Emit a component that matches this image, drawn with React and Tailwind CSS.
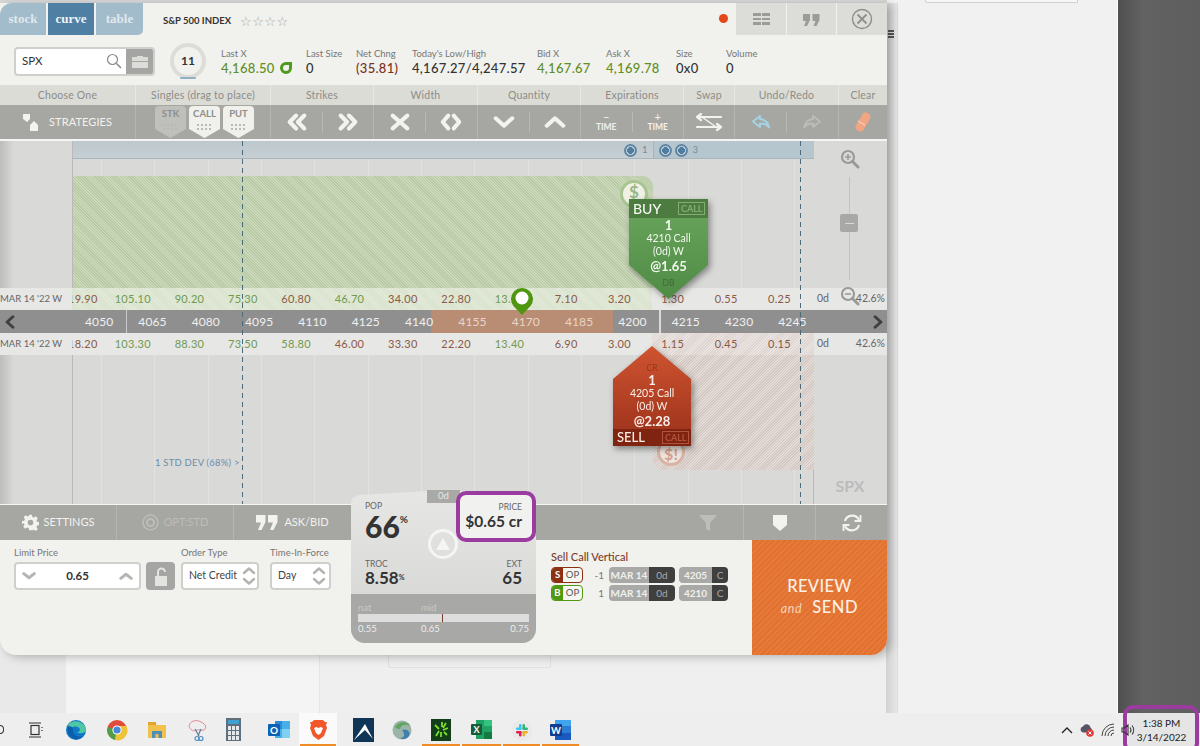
import React from "react";

const font = "[font-family:Lato,'Liberation_Sans',sans-serif]";

const Chev = ({ d, size = 22, color = "#f2f2ee", w = 4.5 }) => (
  <svg width={size} height={size} viewBox="0 0 24 24" fill="none" stroke={color} strokeWidth={w} strokeLinecap="round" strokeLinejoin="round">
    <path d={d} />
  </svg>
);

const Mag = ({ kind }) => (
  <svg width="20" height="20" viewBox="0 0 20 20" fill="none" stroke="#9a9a98" strokeWidth="2.2">
    <circle cx="8" cy="8" r="6" />
    <path d="M12.5 12.5 L18 18" strokeWidth="3" strokeLinecap="round" />
    <path d={kind === "plus" ? "M5 8h6M8 5v6" : "M5 8h6"} strokeWidth="1.6" />
  </svg>
);

const labels = [
  ["Choose One", "w-[136px]"],
  ["Singles (drag to place)", "w-[135px]"],
  ["Strikes", "w-[103px]"],
  ["Width", "w-[104px]"],
  ["Quantity", "w-[103px]"],
  ["Expirations", "w-[103px]"],
  ["Swap", "w-[51px]"],
  ["Undo/Redo", "w-[104px]"],
  ["Clear", "w-[48px]"],
];

const stats = [
  ["Last X", "4,168.50", "text-[#5f8f25]", "w-[85px]", true],
  ["Last Size", "0", "text-[#333]", "w-[50px]"],
  ["Net Chng", "(35.81)", "text-[#7a3222]", "w-[56px]"],
  ["Today's Low/High", "4,167.27/4,247.57", "text-[#333]", "w-[125px]"],
  ["Bid X", "4,167.67", "text-[#5f8f25]", "w-[69px]"],
  ["Ask X", "4,169.78", "text-[#5f8f25]", "w-[70px]"],
  ["Size", "0x0", "text-[#333]", "w-[50px]"],
  ["Volume", "0", "text-[#333]", "w-[60px]"],
];

const strikes = [4050, 4065, 4080, 4095, 4110, 4125, 4140, 4155, 4170, 4185, 4200, 4215, 4230, 4245];
const topVals = [
  ["19.90", "r"], ["105.10", "g"], ["90.20", "g"], ["75.30", "g"], ["60.80", "r"], ["46.70", "g"], ["34.00", "r"],
  ["22.80", "r"], ["13.70", "g"], ["7.10", "r"], ["3.20", "r"], ["1.30", "r"], ["0.55", "r"], ["0.25", "r"],
];
const botVals = [
  ["18.20", "r"], ["103.30", "g"], ["88.30", "g"], ["73.50", "g"], ["58.80", "g"], ["46.00", "r"], ["33.30", "r"],
  ["22.20", "r"], ["13.40", "g"], ["6.90", "r"], ["3.00", "r"], ["1.15", "r"], ["0.45", "r"], ["0.15", "r"],
];

const ValueRow = ({ vals, bg, rightBg }) => (
  <div className="flex h-[22px] items-center bg-[#e7e7e6]">
    <div className="w-[72px] shrink-0 whitespace-nowrap text-[9.5px] text-[#666]">MAR 14 '22 W</div>
    <div className="relative flex h-full w-[742px] shrink-0 overflow-hidden">
      <div className={`h-full w-[580px] shrink-0 ${bg}`} />
      <div className={`h-full w-[162px] shrink-0 ${rightBg}`} />
      <div className="absolute inset-0 flex">
        {vals.map(([v, c]) => (
          <div key={v} className="flex h-full w-[53.33px] shrink-0 items-center justify-end pr-[28px] first:ml-[0.3px]">
            <span className={`whitespace-nowrap text-[11px] tracking-[0.3px] ${c === "g" ? "text-[#6f9a50]" : "text-[#8a5a46]"}`}>{v}</span>
          </div>
        ))}
      </div>
    </div>
    <div className="flex w-[73px] shrink-0 items-center justify-between pl-[3px] pr-[2px] text-[10.5px] text-[#666]">
      <span>0d</span>
      <span>42.6%</span>
    </div>
  </div>
);

const Chip = ({ name, bg }) => (
  <div className={`h-[32px] w-[31px] pt-[2px] text-center [clip-path:polygon(0_0,100%_0,100%_72%,50%_100%,0_72%)] rounded-t-[4px] ${bg}`}>
    <div className="text-[9.5px] font-bold leading-[12px] text-[#8e8e8a]">{name}</div>
    <div className="mx-auto mt-[4px] grid w-[15px] grid-cols-4 gap-[1.5px]">
      {Array.from({ length: 8 }).map((_, i) => (
        <span key={i} className="h-[2px] w-[2px] bg-[#b9b9b5]" />
      ))}
    </div>
  </div>
);

const Sep = () => <div className="h-[20px] w-px bg-[#b9b9b5]" />;

const TimeBtn = ({ s }) => (
  <div className="flex w-[51px] flex-col items-center leading-none text-[#f2f2ee]">
    <span className="text-[11px] leading-[9px]">{s}</span>
    <span className="mt-[2px] text-[8.5px] font-bold">TIME</span>
  </div>
);

const Spinner = () => (
  <svg width="14" height="20" viewBox="0 0 14 20" fill="none" stroke="#b4b4b0" strokeWidth="2.4" strokeLinecap="round" strokeLinejoin="round">
    <path d="M2 7 L7 2.5 L12 7 M2 13 L7 17.5 L12 13" />
  </svg>
);

const LegRow = ({ side, sideBg, border, qty, strike }) => (
  <div className="flex h-[16px] items-center">
    <div className={`flex h-[16px] w-[32px] overflow-hidden rounded-[4px] border ${border} bg-[#f5f5f2]`}>
      <span className={`w-[11px] text-center text-[9.5px] font-bold leading-[14px] text-white ${sideBg}`}>{side}</span>
      <span className="flex-1 text-center text-[9.5px] leading-[14px] text-[#555]">OP</span>
    </div>
    <span className="w-[21px] text-right text-[10px] text-[#777]">{qty}</span>
    <div className="ml-[5px] flex h-[16px] w-[66px] overflow-hidden rounded-[4px] text-[10px] font-bold leading-[16px]">
      <span className="w-[40px] bg-[#a9a9a7] text-center text-[#f0f0ee]">MAR 14</span>
      <span className="flex-1 bg-[#3f3f3f] text-center font-normal text-[#a9a9a7]">0d</span>
    </div>
    <div className="ml-[4px] flex h-[16px] w-[49px] overflow-hidden rounded-[4px] text-[10px] font-bold leading-[16px]">
      <span className="w-[33px] bg-[#a9a9a7] text-center text-[#f0f0ee]">{strike}</span>
      <span className="flex-1 bg-[#3f3f3f] text-center font-normal text-[#a9a9a7]">C</span>
    </div>
  </div>
);

const taskIcons = [
  { w: 40, el: (
    <svg width="18" height="18" viewBox="0 0 18 18" fill="none" stroke="#333" strokeWidth="1.2"><rect x="5" y="4.5" width="8" height="9" /><path d="M3 2h12M3 16h12M16 6v1M16 9v1" /></svg>
  ) },
  { w: 42, el: (
    <svg width="22" height="22" viewBox="0 0 22 22"><circle cx="11" cy="11" r="10" fill="#0f78c9" /><path d="M3 6 C6 0 20 1 21 11 C21 14 15 15 12 13.5 C16 13 16 8 11 7.5 C7 7.5 4 10 3 6Z" fill="#4fc7a4" /><path d="M8 11c0 5 5 8 10 6-3 4-9 4-12 1-3-2-4-7-3-10 2-2 5 0 5 3z" fill="#0a5fa8" /></svg>
  ) },
  { w: 40, el: (
    <svg width="22" height="22" viewBox="0 0 22 22"><circle cx="11" cy="11" r="10" fill="#e24a3b" /><path d="M11 11 L2 8 A10 10 0 0 0 9 21Z" fill="#4f9f4a" /><path d="M11 7h9.5A10 10 0 0 1 9 21Z" fill="#eec33a" /><circle cx="11" cy="11" r="4.6" fill="#fff" /><circle cx="11" cy="11" r="3.6" fill="#4a86d8" /></svg>
  ) },
  { w: 40, el: (
    <svg width="20" height="20" viewBox="0 0 20 20"><path d="M1 3h7l2 2h9v13H1z" fill="#f0c24d" /><rect x="1" y="2" width="8" height="3" fill="#e0a52e" /><rect x="5" y="11" width="10" height="7" fill="#4f8fb8" /><rect x="8.5" y="14" width="3" height="4" fill="#f0c24d" /></svg>
  ) },
  { w: 42, el: (
    <svg width="22" height="24" viewBox="0 0 22 24" fill="none"><path d="M2 8c1-5 7-7 12-4 5 2 6 6 3 8-3 1-5-1-7 0-3 2-7 0-8-4z" stroke="#e08a9a" strokeWidth="1" /><path d="M8 11l4 7M14 11l-3 7" stroke="#5d7f9e" strokeWidth="1.2" /><circle cx="10" cy="20.5" r="2" stroke="#4d8fc0" strokeWidth="1.2" /><circle cx="14" cy="20.5" r="2" stroke="#4d8fc0" strokeWidth="1.2" /></svg>
  ) },
  { w: 38, el: (
    <svg className="-translate-x-[5px]" width="15" height="23" viewBox="0 0 15 23"><rect width="15" height="23" fill="#5d6f7d" /><rect x="2" y="2" width="11" height="4" fill="#3ea0d0" />{[0, 1, 2].map((r) => [0, 1, 2].map((c) => <rect key={`${r}${c}`} x={2 + c * 4} y={8 + r * 5} width="3" height="4" fill="#e4e8ea" />))}</svg>
  ) },
  { w: 42, el: (
    <svg width="23" height="21" viewBox="0 0 23 21"><rect x="8" y="2" width="15" height="17" fill="#48b0e8" /><rect x="8" y="2" width="7" height="8" fill="#2c8ad8" /><rect x="15" y="10" width="8" height="9" fill="#7fd0f2" /><rect x="1" y="5" width="12" height="12" rx="1" fill="#0b63b5" /><text x="7" y="15" fontSize="10" fontWeight="700" fill="#fff" textAnchor="middle">O</text></svg>
  ) },
  { w: 38, active: true, el: (
    <svg width="19" height="22" viewBox="0 0 19 22"><path d="M5 1h9l2 2 2 0-1 3 1 3-3 8-5.5 4-5.5-4-3-8 1-3-1-3 2 0z" fill="#f1572a" /><path d="M5 9l2.5-1 2 1 2-1 2.5 1-2 5-2.5 2-2.500-2z" fill="#fff" /></svg>
  ) },
  { w: 6, sep: true },
  { w: 40, el: (
    <svg width="21" height="24" viewBox="0 0 21 24"><rect width="21" height="24" fill="#0f3557" /><path d="M1 22 L12 6 L20 21 L12 12z" fill="#fff" /></svg>
  ) },
  { w: 38, el: (
    <svg width="20" height="22" viewBox="0 0 20 22"><circle cx="10" cy="11" r="9.5" fill="#9bb4a8" /><path d="M3 8c4-6 12-6 15-1-4-2-9-2-10 3-3 0-4-1-5-2z" fill="#5fa45f" /><path d="M10 11c5-2 9 2 7 6-2 3-6 4-9 2 4 0 6-3 2-8z" fill="#3f7fb0" /></svg>
  ) },
  { w: 40, el: (
    <svg width="20" height="22" viewBox="0 0 20 22"><rect width="20" height="22" fill="#123f1a" /><path d="M11 3v5M15 4l-3 5M17 9l-5 2M4 6l4 4M8 12l-3 5M10 13v5M13 13l3 3" stroke="#7dde2e" strokeWidth="1.8" /></svg>
  ) },
  { w: 41, el: (
    <svg width="21" height="21" viewBox="0 0 21 21"><rect x="5" y="1" width="16" height="19" fill="#21a366" /><rect x="13" y="1" width="8" height="6" fill="#33c481" /><rect x="13" y="13" width="8" height="7" fill="#107c41" /><rect x="0" y="5" width="11" height="11" rx="1" fill="#185c37" /><text x="5.5" y="14" fontSize="9" fontWeight="700" fill="#fff" textAnchor="middle">X</text></svg>
  ) },
  { w: 39, el: (
    <svg width="22" height="22" viewBox="0 0 22 22"><circle cx="11" cy="11" r="10.5" fill="#e9e9e9" /><rect x="8" y="5" width="2.5" height="6" rx="1.2" fill="#36c5f0" /><rect x="5" y="8.5" width="5.5" height="2.5" rx="1.2" fill="#36c5f0" /><rect x="11.5" y="5" width="2.5" height="6" rx="1.2" fill="#2eb67d" /><rect x="11.5" y="8.5" width="5.5" height="2.5" rx="1.2" fill="#2eb67d" /><rect x="11.5" y="12" width="2.5" height="5.5" rx="1.2" fill="#ecb22e" /><rect x="11.5" y="12" width="5.5" height="2.5" rx="1.2" fill="#ecb22e" /><rect x="8" y="12" width="2.5" height="5.5" rx="1.2" fill="#e01e5a" /><rect x="5" y="12" width="5.5" height="2.5" rx="1.2" fill="#e01e5a" /></svg>
  ) },
  { w: 39, el: (
    <svg width="21" height="20" viewBox="0 0 21 20"><rect x="5" y="0" width="16" height="20" fill="#2b7cd3" /><rect x="5" y="0" width="16" height="6" fill="#41a5ee" /><rect x="5" y="13" width="16" height="7" fill="#185abd" /><rect x="0" y="4" width="12" height="12" rx="1" fill="#103f91" /><text x="6" y="13.5" fontSize="9.5" fontWeight="700" fill="#fff" textAnchor="middle">W</text></svg>
  ) },
];

export default function App() {
  return (
    <div className={`relative flex h-[746px] w-[1200px] flex-col overflow-hidden bg-[#f1f1f1] ${font}`}>
      {/* desktop behind the window */}
      <div className="flex h-[713px] shrink-0">
        <div className="flex w-[1118px] flex-col border-r border-white bg-[#f1f1f1]">
          <div className="flex h-[3px] shrink-0">
            <div className="h-[3px] w-[887px] bg-[#d9d9d9]" />
            <div className="ml-[38px] h-[3px] w-[153px] rounded-b-[2px] border border-t-0 border-[#cfcfcf] bg-[#f6f6f6]" />
          </div>
          <div className="flex h-[710px] justify-start">
            <div className="h-full w-[66px] bg-[#e9e9e9]" />
            <div className="h-full w-[254px] border-r border-[#e4e4e4] bg-[#f4f4f4]" />
            <div className="h-full w-[567px] bg-[#efefef]">
              <div className="ml-[68px] mt-[640px] h-[25px] w-[163px] rounded-b-[2px] border border-t-0 border-[#e0e0e0]" />
            </div>
            <div className="flex h-full w-[11px] flex-col bg-[linear-gradient(90deg,#d2d2d2,#e6e6e6)] pl-[2px] pt-[27px]">
              <span className="h-[2px] w-[6px] bg-[#555]" />
              <span className="mt-[1px] h-[2px] w-[6px] bg-[#555]" />
              <span className="mt-[1px] h-[2px] w-[6px] bg-[#555]" />
            </div>
            <div className="h-full w-[220px] border-l border-[#dcdcdc] bg-[#f1f1f1]" />
          </div>
        </div>
        <div className="flex-1 bg-[linear-gradient(90deg,#4f4f4f,#626262_30%,#5e5e5e)]" />
      </div>

      {/* taskbar */}
      <div className="relative flex h-[33px] shrink-0 items-stretch bg-[#eeeeee]">
        <div className="w-[5px] shrink-0 self-center">
          <div className="h-[9px] w-[4px] rounded-r-full border-[1.5px] border-l-0 border-[#333]" />
        </div>
        <div className="ml-[10px] flex items-stretch">
          {taskIcons.map((t, i) =>
            t.sep ? (
              <div key={i} style={{ width: t.w }} />
            ) : (
              <div key={i} style={{ width: t.w }} className={`relative flex items-center justify-center ${t.active ? "bg-[#fafafa]" : ""}`}>
                {t.el}
                {i >= 7 && i !== 9 && i !== 10 && <span className="absolute inset-x-[1px] bottom-0 h-[2px] bg-[#f08c28]" />}
              </div>
            )
          )}
        </div>
        <div className="ml-auto flex items-center gap-[6px] pr-[5px]">
          <svg width="12" height="8" viewBox="0 0 12 8" fill="none" stroke="#222" strokeWidth="1.3"><path d="M1 7l5-5 5 5" /></svg>
          <svg width="16" height="14" viewBox="0 0 16 14"><path d="M3 9a3 3 0 0 1 1-5.5 4 4 0 0 1 7.5 1 3 3 0 0 1 0 5H4z" fill="#556" /><circle cx="11" cy="10" r="3.8" fill="#e0393a" /><path d="M9.5 8.5l3 3M12.5 8.5l-3 3" stroke="#fff" strokeWidth="1" /></svg>
          <svg width="14" height="14" viewBox="0 0 14 14" fill="none" stroke="#444" strokeWidth="1"><path d="M1 13A12 12 0 0 1 13 1M4 13A9 9 0 0 1 13 4M7 13a6 6 0 0 1 6-6M10 13a3 3 0 0 1 3-3" /></svg>
          <svg className="relative z-10" width="14" height="14" viewBox="0 0 14 14" fill="none" stroke="#333" strokeWidth="1.1"><path d="M1 5h2.5L7 2v10L3.500 9H1zM9 4.500a4 4 0 0 1 0 5M11 2.500a7 7 0 0 1 0 9" /></svg>
          <div className="-ml-[13px] flex h-[33px] w-[67px] flex-col items-center justify-center bg-[#e5e5e5] text-[10px] leading-[14px] text-[#222]">
            <span>1:38 PM</span>
            <span>3/14/2022</span>
          </div>
        </div>
      </div>

      {/* purple clock highlight */}
      <div className="absolute left-[1123px] top-[705px] h-[48px] w-[76px] rounded-[10px] border-[4px] border-[#9a3c9f]" />

      {/* window */}
      <div className="absolute left-0 top-[3px] flex h-[652px] w-[887px] flex-col overflow-hidden rounded-b-[16px] bg-[#f1f1ed] shadow-[4px_2px_10px_rgba(0,0,0,0.25)]">
        {/* title row */}
        <div className="flex h-[32px] shrink-0 items-stretch">
          <div className="flex items-stretch gap-[2px]">
            <div className="flex w-[46px] items-center justify-center rounded-tl-[12px] bg-[#a3bccb] text-[13px] font-bold text-[#dfe9ef] [font-family:'Liberation_Serif',serif]">stock</div>
            <div className="flex w-[46px] items-center justify-center bg-[#4f7fa3] text-[13px] font-bold text-[#eef4f8] [font-family:'Liberation_Serif',serif]">curve</div>
            <div className="flex w-[47px] items-center justify-center rounded-br-[5px] bg-[#a3bccb] text-[13px] font-bold text-[#dfe9ef] [font-family:'Liberation_Serif',serif]">table</div>
          </div>
          <div className="ml-[20px] mt-[4px] flex items-center">
            <span className="text-[9.5px] font-bold text-[#333]">S&amp;P 500 INDEX</span>
            <span className="ml-[9px] text-[13px] leading-none tracking-[0.5px] text-[#a5a5a0] [font-family:'DejaVu_Sans',sans-serif]">☆☆☆☆</span>
          </div>
          <div className="ml-auto flex items-stretch">
            <div className="mr-[8px] mt-[11px] h-[9px] w-[9px] rounded-full bg-[#e4481a]" />
            <div className="flex w-[50px] items-center justify-center bg-[#dcdcd8]">
              <div className="grid grid-cols-2 gap-x-[1px] gap-y-[2px]">
                {[0, 1, 2, 3, 4, 5].map((i) => <span key={i} className="h-[2.5px] w-[8px] bg-[#9b9b97]" />)}
              </div>
            </div>
            <div className="ml-[1px] flex w-[49px] items-center justify-center bg-[#dcdcd8] pt-[1px] text-[#9b9b97]">
              <svg width="17" height="12" viewBox="0 0 17 12" fill="#9b9b97"><path d="M0 0h7v6l-3 6H1l2-5H0zM9.5 0h7v6l-3 6h-3l2-5h-3z" /></svg>
            </div>
            <div className="ml-[1px] flex w-[50px] items-center justify-center bg-[#dcdcd8]">
              <svg width="22" height="22" viewBox="0 0 22 22" fill="none" stroke="#8e8e8a" strokeWidth="1.4"><circle cx="11" cy="11" r="9.5" /><path d="M6.5 6.5l9 9M15.5 6.5l-9 9" strokeWidth="1.8" /></svg>
            </div>
          </div>
        </div>

        {/* quote row */}
        <div className="flex h-[50px] shrink-0 items-center pl-[14px] pt-[2px]">
          <div className="flex h-[29px] w-[141px] overflow-hidden rounded-[4px] border-2 border-[#cfcfcb] bg-white">
            <span className="flex w-[110px] items-center justify-between pl-[6px] pr-[4px] text-[11.5px] text-[#333]">
              SPX
              <svg width="16" height="16" viewBox="0 0 16 16" fill="none" stroke="#8a8a86" strokeWidth="1.2"><circle cx="6.5" cy="6.5" r="5" /><path d="M10.5 10.5L15 15" strokeWidth="1.5" /></svg>
            </span>
            <span className="flex flex-1 items-center justify-center bg-[#a5a5a3]">
              <svg width="16" height="13" viewBox="0 0 16 13" fill="#dcdcd8"><path d="M5 2V1h6v1h4a1 1 0 0 1 1 1v3H0V3a1 1 0 0 1 1-1zM0 7h16v5a1 1 0 0 1-1 1H1a1 1 0 0 1-1-1z" /></svg>
            </span>
          </div>
          <div className="relative ml-[15px] flex h-[36px] w-[36px] shrink-0 items-center justify-center rounded-full border-[4px] border-[#dcdcd8] text-[12px] font-bold text-[#333]">
            11
            <span className="absolute bottom-[-4px] left-[6px] h-[2px] w-[16px] rounded-full bg-[#8fb0c0]" />
          </div>
          <div className="ml-[15px] flex">
            {stats.map(([l, v, c, w, ring]) => (
              <div key={l} className={`${w} shrink-0 pt-[1px]`}>
                <div className="text-[9.5px] leading-[13px] text-[#777]">{l}</div>
                <div className={`flex items-center whitespace-nowrap text-[13px] font-medium leading-[16px] tracking-[0.3px] ${c}`}>
                  {v}
                  {ring && <span className="ml-[5px] h-[12px] w-[12px] rounded-full rounded-tr-[2px] border-[3px] border-[#4f9a1c]" />}
                </div>
              </div>
            ))}
          </div>
        </div>

        {/* labels row */}
        <div className="flex h-[20px] shrink-0 bg-[#dcdcd6]">
          {labels.map(([l, w]) => (
            <div key={l} className={`${w} flex items-center justify-center border-r border-[#e8e8e3] pt-[1px] text-[10.5px] tracking-[0.2px] text-[#8c8c88] last:border-r-0`}>{l}</div>
          ))}
        </div>

        {/* tool row */}
        <div className="flex h-[34px] shrink-0 items-center bg-[#a6a6a2] text-[#f2f2ee]">
          <div className="flex h-full w-[136px] items-center border-r border-[#b5b5b1] pl-[23px] pt-[1px]">
            <svg width="16" height="17" viewBox="0 0 16 17" fill="#f2f2ee"><path d="M0 0h7v5l-3 3-4-3z" /><path d="M7 11l4-4 4 4v6H7z" /></svg>
            <span className="ml-[10px] text-[11px] tracking-[0.1px]">STRATEGIES</span>
          </div>
          <div className="flex h-full w-[135px] items-start gap-[3px] border-r border-[#b5b5b1] pl-[19px] pt-[1px]">
            <Chip name="STK" bg="bg-[#bfbfbb]" />
            <Chip name="CALL" bg="bg-[#f0f0ec]" />
            <Chip name="PUT" bg="bg-[#f0f0ec]" />
          </div>
          <div className="flex h-full w-[103px] items-center justify-center gap-[14px] border-r border-[#b5b5b1]">
            <Chev d="M11 5l-7 7 7 7M20 5l-7 7 7 7" />
            <Sep />
            <Chev d="M4 5l7 7-7 7M13 5l7 7-7 7" />
          </div>
          <div className="flex h-full w-[104px] items-center justify-center gap-[14px] border-r border-[#b5b5b1]">
            <Chev d="M4 5l8 7-8 7M20 5l-8 7 8 7" />
            <Sep />
            <Chev d="M9 5l-6 7 6 7M15 5l6 7-6 7" />
          </div>
          <div className="flex h-full w-[103px] items-center justify-center gap-[14px] border-r border-[#b5b5b1]">
            <Chev d="M3 8l9 8 9-8" />
            <Sep />
            <Chev d="M3 16l9-8 9 8" />
          </div>
          <div className="flex h-full w-[103px] items-center border-r border-[#b5b5b1]">
            <TimeBtn s="−" />
            <Sep />
            <TimeBtn s="+" />
          </div>
          <div className="flex h-full w-[51px] items-center justify-center border-r border-[#b5b5b1]">
            <svg width="28" height="18" viewBox="0 0 28 18" fill="none" stroke="#f2f2ee" strokeWidth="2.2" strokeLinecap="round" strokeLinejoin="round"><path d="M26 4C16 4 14 4 5 4M6 1L2 4l4 3M2 14c10 0 12 0 21 0M22 11l4 3-4 3" /><path d="M7 4l14 10" strokeWidth="1.5" /></svg>
          </div>
          <div className="flex h-full w-[104px] items-center justify-center gap-[15px] border-r border-[#b5b5b1]">
            <svg width="20" height="16" viewBox="0 0 20 16" fill="none" stroke="#a5d3e6" strokeWidth="2" strokeLinejoin="round"><path d="M9 2L2 7.5 9 13V9.5c4 0 7 1 9 4-1-5-4-8-9-8.5z" /></svg>
            <Sep />
            <svg width="20" height="16" viewBox="0 0 20 16" fill="none" stroke="#bcbcb8" strokeWidth="1.8" strokeLinejoin="round"><path d="M11 2l7 5.5L11 13V9.5c-4 0-7 1-9 4 1-5 4-8 9-8.5z" /></svg>
          </div>
          <div className="flex h-full w-[48px] items-center justify-center">
            <svg width="16" height="20" viewBox="0 0 16 20"><rect x="3.5" y="0" width="9" height="20" rx="4" transform="rotate(30 8 10)" fill="#f0a583" /><path d="M3 9l7 4" stroke="#f7cdb7" strokeWidth="1.2" /></svg>
          </div>
        </div>

        <div className="h-[2px] shrink-0 bg-[#f5f5f5]" />

        {/* chart */}
        <div className="relative h-[363px] shrink-0 bg-[#d9d9d8]">
          {/* upper area */}
          <div className="flex h-[147px]">
            <div className="w-[72px] shrink-0 bg-[linear-gradient(90deg,#bdbdbc,#d9d9d8_14px)]" />
            <div className="flex w-[742px] shrink-0 flex-col border-l border-[#b9b9b9] bg-[repeating-linear-gradient(90deg,#e2e2e1_0_1px,transparent_1px_53.33px)] bg-[position:28px_0]">
              <div className="flex h-[18px] shrink-0 border-b border-[#a9b5bd]">
                <div className="h-full w-[580px] bg-[linear-gradient(#bdc8cd,#c6cfd3)]" />
                <div className="relative flex h-full flex-1 items-center border-l border-[#a9b5bd] bg-[#b6c6cf] text-[10px] text-[#7a8a95]" />
              </div>
              <div className="h-[17px] shrink-0" />
              <div className="h-[112px] w-[580px] rounded-tr-[10px] bg-[repeating-linear-gradient(45deg,#b8cba5_0_1px,#cbd8bc_1px_2px)]" />
            </div>
            <div className="flex w-[73px] flex-col items-center pr-[2px] pt-[8px]">
              <Mag kind="plus" />
              <div className="relative mt-[8px] h-[103px] w-px bg-[#c2c2c1]">
                <div className="absolute left-[-9px] top-[37px] flex h-[18px] w-[18px] items-center justify-center rounded-[2px] bg-[#a8a8a6]">
                  <span className="h-px w-[9px] bg-[#d9d9d8]" />
                </div>
              </div>
            </div>
          </div>

          <ValueRow vals={topVals} bg="bg-[repeating-linear-gradient(45deg,#d8e2cc_0_1px,#e3ead9_1px_2px)]" rightBg="bg-[#e7e7e6]" />

          {/* strike bar */}
          <div className="relative flex h-[23px] items-center bg-[#8f8f8f]">
            <div className="flex w-[72px] shrink-0 pl-[3px]">
              <Chev d="M17 3L7 12l10 9" size={14} color="#3f3f3f" w={5} />
            </div>
            <span className="absolute inset-y-0 left-[126px] w-px bg-[#c9c9c9]" />
            <span className="absolute inset-y-0 left-[431px] w-[182px] bg-[#b98d74]" />
            <span className="absolute inset-y-0 left-[659px] w-[2px] bg-[#d9d9d9]" />
            <div className="relative ml-[0.5px] flex w-[747px] shrink-0 pt-[1px]">
              {strikes.map((s, i) => (
                <span key={s} className={`w-[53.33px] shrink-0 text-center text-[12px] tracking-[0.1px] ${i >= 7 && i <= 9 ? "text-[#e8d5c8]" : "text-[#f0f0f0]"}`}>{s}</span>
              ))}
            </div>
            <div className="ml-auto pr-[2px]">
              <Chev d="M7 3l10 9-10 9" size={14} color="#3f3f3f" w={5} />
            </div>
          </div>

          <ValueRow vals={botVals} bg="bg-[#e7e7e6]" rightBg="bg-[repeating-linear-gradient(-45deg,#ded5d0_0_1px,#e9e4e1_1px_2px)]" />

          {/* lower area */}
          <div className="flex h-[149px]">
            <div className="w-[72px] shrink-0 bg-[linear-gradient(90deg,#bdbdbc,#d9d9d8_14px)]" />
            <div className="flex w-[742px] shrink-0 flex-col border-l border-r border-[#b9b9b9] bg-[repeating-linear-gradient(90deg,#e2e2e1_0_1px,transparent_1px_53.33px)] bg-[position:28px_0]">
              <div className="ml-[580px] h-[115px] w-[161px] rounded-bl-[10px] bg-[repeating-linear-gradient(-45deg,#d3c8c2_0_1px,#e2dbd7_1px_2px)]" />
              <div className="-mt-[13px] ml-[82px] text-[9.5px] leading-[12px] tracking-[0.2px] text-[#6f8ca8]">1 STD DEV (68%) &gt;</div>
            </div>
            <div className="flex w-[73px] items-end justify-center pb-[8px] pr-[1px] text-[16px] font-bold leading-[20px] text-[#bcbcbc]">SPX</div>
          </div>

          {/* band markers */}
          <div className="absolute left-[624px] top-[1px] flex h-[16px] items-center text-[9.5px] text-[#7a8a95]">
            <span className="h-[13px] w-[13px] rounded-full border-[2px] border-[#5f86a5] bg-[radial-gradient(#4f7da0_55%,#c4d0d6_56%)]" />
            <span className="ml-[5px]">1</span>
            <span className="ml-[11px] h-[13px] w-[13px] rounded-full border-[2px] border-[#5f86a5] bg-[radial-gradient(#4f7da0_55%,#c4d0d6_56%)]" />
            <span className="ml-[3px] h-[13px] w-[13px] rounded-full border-[2px] border-[#5f86a5] bg-[radial-gradient(#4f7da0_55%,#c4d0d6_56%)]" />
            <span className="ml-[5px]">3</span>
          </div>

          {/* dashed lines */}
          <div className="absolute bottom-0 left-[242px] top-0 w-px bg-[repeating-linear-gradient(180deg,#4c6a78_0_5px,transparent_5px_9px)]" />
          <div className="absolute bottom-0 left-[800px] top-0 w-px bg-[repeating-linear-gradient(180deg,#4c6a78_0_5px,transparent_5px_9px)]" />

          {/* zoom out */}
          <div className="absolute left-[840px] top-[145px]"><Mag kind="minus" /></div>

          {/* $ badges */}
          <div className="absolute left-[620px] top-[39px] flex h-[28px] w-[28px] items-center justify-center rounded-full border-[3px] border-[#a8c490] bg-[#eef1e4] pb-[4px] text-[17px] font-bold text-[#9ab583]">$</div>
          <div className="absolute left-[657px] top-[297px] flex h-[28px] w-[28px] items-center justify-center rounded-full border-[3px] border-[#d8b3a3] bg-[#eee4de] pt-[4px] text-[16px] font-bold text-[#d0a090]">$!</div>

          {/* price pin */}
          <svg className="absolute left-[510px] top-[146px]" width="24" height="30" viewBox="0 0 24 30">
            <path d="M12 28 L3.5 19 A11 11 0 1 1 20.5 19 Z" fill="#4f9610" />
            <circle cx="12" cy="11" r="6.5" fill="#fff" />
          </svg>

          {/* buy card */}
          <div className="absolute left-[629px] top-[58px] drop-shadow-[2px_3px_3px_rgba(0,0,0,0.4)]">
            <div className="h-[100px] w-[79px] rounded-t-[3px] bg-[linear-gradient(#6aa65c,#4f8b45)] text-center text-[#f4f8f0] [clip-path:polygon(0_0,100%_0,100%_66%,50%_100%,0_66%)]">
              <div className="flex h-[19px] items-center justify-between bg-[#4d7c41] pl-[4px] pr-[3px]">
                <span className="text-[14px] font-medium leading-none">BUY</span>
                <span className="border border-[#84ad76] px-[1.5px] text-[9px] font-bold leading-[11px] text-[#84ad76]">CALL</span>
              </div>
              <div className="text-[13px] font-bold leading-[14px]">1</div>
              <div className="text-[10.5px] leading-[13px]">4210 Call</div>
              <div className="text-[10.5px] leading-[13px]">(0d) W</div>
              <div className="text-[13px] font-bold leading-[16px]">@1.65</div>
              <div className="mt-[4px] text-[8.5px] leading-[10px] text-[#3c6b33]">DB</div>
            </div>
          </div>

          {/* sell card */}
          <div className="absolute left-[613px] top-[205px] drop-shadow-[2px_3px_3px_rgba(0,0,0,0.4)]">
            <div className="flex h-[100px] w-[78px] flex-col rounded-b-[3px] bg-[linear-gradient(#cf5430,#99301a)] text-center text-[#fbeee8] [clip-path:polygon(50%_0,100%_33%,100%_100%,0_100%,0_33%)]">
              <div className="mt-[17px] text-[8.5px] leading-[10px] text-[#8e3a22]">CR</div>
              <div className="text-[13px] font-bold leading-[14px]">1</div>
              <div className="text-[10.5px] leading-[13px]">4205 Call</div>
              <div className="text-[10.5px] leading-[13px]">(0d) W</div>
              <div className="text-[13px] font-bold leading-[16px]">@2.28</div>
              <div className="mt-auto flex h-[18px] items-center justify-between bg-[#802412] pl-[4px] pr-[2px]">
                <span className="text-[13px] font-medium leading-none">SELL</span>
                <span className="border border-[#b0523c] px-[1.5px] text-[9px] font-bold leading-[11px] text-[#b0523c]">CALL</span>
              </div>
            </div>
          </div>
        </div>

        {/* bottom bar */}
        <div className="flex h-[36px] shrink-0 items-stretch border-t-[1px] border-[#f5f5f5] bg-[#a6a6a2] text-[11px] text-[#f2f2ee]">
          <div className="flex w-[117px] items-center justify-center gap-[5px] border-r border-[#b5b5b1]">
            <svg width="17" height="17" viewBox="0 0 24 24" fill="#f2f2ee"><path fillRule="evenodd" d="M10 1h4l.6 3.2 2.2.9 2.7-1.800 2.800 2.800-1.800 2.700.9 2.200 3.200.6v4l-3.200.6-.9 2.200 1.800 2.700-2.800 2.800-2.700-1.800-2.200.9L14 23h-4l-.6-3.200-2.200-.9-2.700 1.800-2.800-2.800 1.800-2.700-.9-2.200L0 14v-4l3.200-.6.9-2.200-1.800-2.700 2.800-2.800 2.700 1.800 2.200-.9zM12 8a4 4 0 1 0 0 8 4 4 0 0 0 0-8z" /></svg>
            <span>SETTINGS</span>
          </div>
          <div className="flex w-[117px] items-center justify-center gap-[5px] border-r border-[#b5b5b1] text-[#bdbdb9]">
            <svg width="17" height="17" viewBox="0 0 17 17" fill="none" stroke="#bdbdb9"><circle cx="8.5" cy="8.5" r="7.5" strokeWidth="1.5" /><circle cx="8.5" cy="8.5" r="3.5" strokeWidth="2" /></svg>
            <span>OPT:STD</span>
          </div>
          <div className="flex w-[117px] items-center justify-center gap-[6px]">
            <svg width="22" height="15" viewBox="0 0 22 15" fill="#f2f2ee"><path d="M0 0h9.5v7l-4 8H2l3-7.5H0zM12 0h9.5v7l-4 8H14l3-7.5h-5z" /></svg>
            <span>ASK/BID</span>
          </div>
          <div className="ml-auto flex w-[72px] items-center justify-center border-r border-[#b5b5b1]">
            <svg width="18" height="18" viewBox="0 0 18 18" fill="#bdbdb9"><path d="M0 1h18L11 9v8L7 15V9z" /></svg>
          </div>
          <div className="flex w-[72px] items-center justify-center border-r border-[#b5b5b1]">
            <svg width="14" height="16" viewBox="0 0 14 16" fill="#f2f2ee"><path d="M0 0h14v10l-7 6-7-6z" /></svg>
          </div>
          <div className="flex w-[71px] items-center justify-center">
            <svg width="20" height="20" viewBox="0 0 20 20" fill="none" stroke="#f2f2ee" strokeWidth="2.2"><path d="M17 7A7.5 7.5 0 0 0 3 8M3 13a7.5 7.5 0 0 0 14-1" /><path d="M18.5 2v6h-6M1.5 18v-6h6" strokeWidth="1.8" /></svg>
          </div>
        </div>

        {/* form */}
        <div className="flex min-h-0 flex-1 items-stretch">
          <div className="flex w-[351px] pl-[14px] pt-[6px]">
            <div>
              <div className="text-[9.5px] leading-[14px] text-[#777]">Limit Price</div>
              <div className="mt-[2px] flex items-center">
                <div className="flex h-[28px] w-[127px] items-center justify-between rounded-[4px] border-2 border-[#cfcfcb] bg-white px-[6px]">
                  <Chev d="M3 8l9 7 9-7" size={14} color="#b4b4b0" w={5} />
                  <span className="text-[11.5px] font-bold text-[#333]">0.65</span>
                  <Chev d="M3 16l9-7 9 7" size={14} color="#b4b4b0" w={5} />
                </div>
                <div className="ml-[5px] flex h-[28px] w-[29px] items-center justify-center rounded-[4px] bg-[#a5a5a3]">
                  <svg width="14" height="19" viewBox="0 0 14 19" fill="#e3e3df"><path d="M1 9h12v10H1z" /><path d="M4 9V5a3.5 3.5 0 0 1 7 0" fill="none" stroke="#e3e3df" strokeWidth="2" /></svg>
                </div>
              </div>
            </div>
            <div className="ml-[6px]">
              <div className="text-[9.5px] leading-[14px] text-[#777]">Order Type</div>
              <div className="mt-[2px] flex h-[28px] w-[78px] items-center justify-between rounded-[4px] border-2 border-[#cfcfcb] bg-white pl-[6px] pr-[1px] text-[10.5px] text-[#444]">
                Net Credit <Spinner />
              </div>
            </div>
            <div className="ml-[11px]">
              <div className="text-[9.5px] leading-[14px] text-[#777]">Time-In-Force</div>
              <div className="mt-[2px] flex h-[28px] w-[61px] items-center justify-between rounded-[4px] border-2 border-[#cfcfcb] bg-white pl-[6px] pr-[3px] text-[10.5px] text-[#444]">
                Day <Spinner />
              </div>
            </div>
          </div>
          <div className="ml-[200px] flex w-[201px] flex-col pt-[10px]">
            <div className="text-[11px] font-medium leading-[14px] text-[#7a3c2c]">Sell Call Vertical</div>
            <div className="mt-[3px] flex flex-col gap-[2px]">
              <LegRow side="S" sideBg="bg-[#8f2f12]" border="border-[#8f2f12]" qty="-1" strike="4205" />
              <LegRow side="B" sideBg="bg-[#4f9a10]" border="border-[#4f9a10]" qty="1" strike="4210" />
            </div>
          </div>
          <div className="flex flex-1 flex-col items-center justify-center bg-[repeating-linear-gradient(-45deg,#e2702f_0_2px,#e67a3b_2px_4px)] text-[#fbf0e6]">
            <div className="text-[16.5px] font-medium leading-[20px] tracking-[0.3px]">REVIEW</div>
            <div className="flex items-baseline leading-[22px]">
              <span className="mr-[10px] text-[12.5px] italic tracking-[0.6px] text-[#f5d3b9]">and</span>
              <span className="text-[16.5px] font-medium tracking-[0.6px]">SEND</span>
            </div>
          </div>
        </div>

        {/* POP card */}
        <div className="absolute left-[351px] top-[487px] h-[153px] w-[185px] overflow-hidden rounded-[14px] bg-[linear-gradient(#e6e6e4,#d4d4d2)] [clip-path:polygon(0_9px,8px_5px,76px_1px,185px_1px,185px_153px,0_153px)]">
          <div className="relative h-[104px]">
            <div className="absolute left-[14px] top-[11px] text-[8.5px] leading-[10px] text-[#666]">POP</div>
            <div className="absolute left-[14px] top-[19px] flex items-start text-[#333]">
              <span className="text-[30px] font-black leading-[34px]">66</span>
              <span className="mt-[4px] text-[10px] font-bold leading-[12px]">%</span>
            </div>
            <div className="absolute left-[14px] top-[69px] text-[8.5px] leading-[10px] text-[#666]">TROC</div>
            <div className="absolute left-[14px] top-[79px] flex items-start text-[#333]">
              <span className="text-[17px] font-bold leading-[18px]">8.58</span>
              <span className="mt-[4px] text-[7px] font-bold leading-[8px]">%</span>
            </div>
            <div className="absolute right-[14px] top-[69px] text-[8.5px] leading-[10px] text-[#666]">EXT</div>
            <div className="absolute right-[14px] top-[79px] text-[17px] font-bold leading-[18px] text-[#333]">65</div>
            <div className="absolute left-[77px] top-[39px] flex h-[30px] w-[30px] items-center justify-center rounded-full border-[3px] border-[#f5f5f3]">
              <span className="h-[12px] w-[14px] bg-[#f5f5f3] [clip-path:polygon(50%_0,100%_100%,0_100%)]" />
            </div>
          </div>
          <div className="h-[49px] bg-[#a8a8a6] px-[7px] pt-[9px] text-[#eee]">
            <div className="flex text-[9.5px] leading-[10px] text-[#c9c9c7]">
              <span className="w-[63px]">nat</span>
              <span>mid</span>
            </div>
            <div className="relative mt-[1px] h-[8px] bg-[#ddd]">
              <span className="absolute bottom-0 left-[84px] top-0 w-px bg-[#7a3c2c]" />
            </div>
            <div className="mt-[1px] flex text-[9.5px] leading-[12px]">
              <span className="w-[63px]">0.55</span>
              <span>0.65</span>
              <span className="ml-auto">0.75</span>
            </div>
          </div>
        </div>
        <div className="absolute left-[427px] top-[487px] flex h-[13px] w-[33px] items-center justify-center bg-[#a9a9a6] text-[9.5px] text-[#e8e8e6]">0d</div>

        {/* PRICE highlight */}
        <div className="absolute left-[456px] top-[488px] flex h-[51px] w-[80px] flex-col items-end rounded-[10px] border-[4px] border-[#9a3c9f] bg-[#f1f1ef] pr-[10px] pt-[7px] text-[#333]">
          <span className="text-[8.5px] leading-[10px] text-[#666]">PRICE</span>
          <span className="whitespace-nowrap text-[15.5px] font-bold leading-[19px]">$0.65 cr</span>
        </div>
      </div>
    </div>
  );
}
